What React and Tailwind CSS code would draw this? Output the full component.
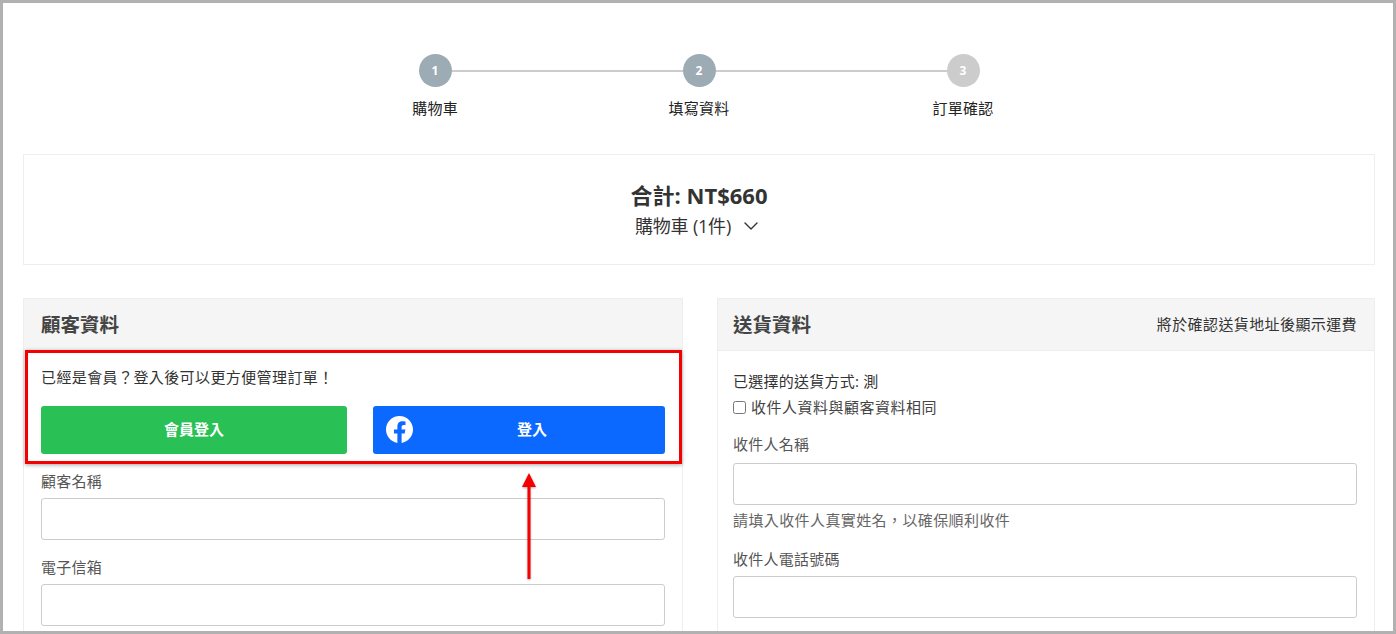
import { ChevronDown } from 'lucide-react'

const font = 'font-["Open_Sans","Noto_Sans_CJK_TC",sans-serif]'

function Field({ label, hint, gap = 'mt-[7px]', className = '' }) {
    return (
        <div className={className}>
            <div className="text-[15px] leading-[20px] text-[#555] tracking-[0.25px]">{label}</div>
            <div className={`${gap} h-[42px] rounded-[3px] border border-[#ccc] bg-white`} />
            {hint && <div className="mt-[5px] text-[15px] leading-[20px] text-[#666] tracking-[0.4px]">{hint}</div>}
        </div>
    )
}

function Step({ n, muted }) {
    return (
        <div className={`w-[33px] h-[33px] shrink-0 rounded-full flex items-center justify-center text-xs font-bold text-white ${muted ? 'bg-[#ccc]' : 'bg-[#9dabb5]'}`}>
            {n}
        </div>
    )
}

function StepLabel({ children }) {
    return (
        <div className="w-[33px] flex justify-center whitespace-nowrap text-[15px] leading-[20px] text-[#222] tracking-[0.25px]">{children}</div>
    )
}

export default function App() {
    return (
        <div className={`${font} relative h-[634px] w-[1396px] overflow-hidden bg-white border-[3px] border-[#b1b1b1] text-[#333]`}>
            {/* Stepper */}
            <div className="pt-[51px] mx-auto w-[561px] translate-x-[1px]">
                <div className="flex items-center">
                    <Step n={1} />
                    <div className="h-[2px] flex-1 bg-[#ccc]" />
                    <Step n={2} />
                    <div className="h-[2px] flex-1 bg-[#ccc]" />
                    <Step n={3} muted />
                </div>
                <div className="mt-[11px] flex justify-between">
                    <StepLabel>購物車</StepLabel>
                    <StepLabel>填寫資料</StepLabel>
                    <StepLabel>訂單確認</StepLabel>
                </div>
            </div>

            <div className="pl-[20px] pr-[18px]">
                {/* Summary */}
                <div className="mt-[36px] h-[111px] border border-[#eee] flex flex-col items-center pt-[25px]">
                    <div className="text-[22px] leading-[30px] font-bold text-[#333]">合計: NT$660</div>
                    <div className="mt-[3px] flex items-center text-[18px] leading-[26px] text-[#333] -tracking-[0.2px]">
                        購物車 (1件)
                        <ChevronDown className="ml-[8px] w-[24px] h-[24px] text-[#333]" strokeWidth={1.4} />
                    </div>
                </div>

                <div className="mt-[33px] flex justify-between">
                    {/* Customer */}
                    <div className="w-[660px] border border-[#eee] h-[400px]">
                        <div className="h-[52px] bg-[#f5f5f5] border-b border-[#eee] px-[17px] flex items-center text-[19.5px] font-bold text-[#444]">
                            顧客資料
                        </div>
                        <div className="px-[17px]">
                            <div className="mt-[16px] text-[15px] leading-[20px] text-[#333] tracking-[0.4px]">已經是會員？登入後可以更方便管理訂單！</div>
                            <div className="mt-[19px] flex gap-[26px]">
                                <button className="w-[306px] h-[48px] pb-[2px] rounded-[3px] bg-[#29c155] text-white text-[15px] font-bold">會員登入</button>
                                <button className="relative w-[292px] h-[48px] pl-[26px] pb-[2px] rounded-[3px] bg-[#0b69ff] text-white text-[15px] font-bold">
                                    <svg viewBox="0 0 24 24" className="absolute left-[13px] top-[10px] w-[27px] h-[27px]" fill="#fff">
                                        <path d="M24 12.07C24 5.4 18.63 0 12 0S0 5.4 0 12.07c0 6.03 4.39 11.02 10.13 11.93v-8.44H7.08v-3.49h3.05V9.41c0-3.02 1.79-4.69 4.53-4.69 1.31 0 2.69.24 2.69.24v2.97h-1.52c-1.49 0-1.96.93-1.96 1.85v2.29h3.33l-.53 3.49h-2.8V24C19.61 23.09 24 18.1 24 12.07z" />
                                    </svg>
                                    登入
                                </button>
                            </div>
                            <Field label="顧客名稱" className="mt-[17px]" />
                            <Field label="電子信箱" className="mt-[17px]" />
                        </div>
                    </div>

                    {/* Delivery */}
                    <div className="w-[658px] border border-[#eee] h-[400px]">
                        <div className="h-[52px] bg-[#f5f5f5] border-b border-[#eee] pl-[15px] pr-[17px] flex items-center justify-between">
                            <span className="text-[19.5px] font-bold text-[#444]">送貨資料</span>
                            <span className="text-[15px] text-[#333] tracking-[0.4px]">將於確認送貨地址後顯示運費</span>
                        </div>
                        <div className="pl-[15px] pr-[17px]">
                            <div className="mt-[20px] text-[15px] leading-[20px] text-[#333] tracking-[0.25px]">已選擇的送貨方式: 測</div>
                            <label className="mt-[6px] flex items-center text-[15px] leading-[20px] text-[#444] tracking-[0.5px]">
                                <input type="checkbox" className="w-[13px] h-[13px] mr-[5px]" />
                                收件人資料與顧客資料相同
                            </label>
                            <div className="mt-[17px] text-[15px] leading-[20px] text-[#555] tracking-[0.25px]">收件人名稱</div>
                            <div className="mt-[9px] h-[42px] rounded-[3px] border border-[#ccc] bg-white" />
                            <div className="mt-[5px] text-[15px] leading-[20px] text-[#666] tracking-[0.4px]">請填入收件人真實姓名，以確保順利收件</div>
                            <Field label="收件人電話號碼" className="mt-[19px]" />
                        </div>
                    </div>
                </div>
            </div>

            {/* Annotation: red frame and arrow drawn over the page */}
            <div className="absolute left-[22px] top-[347px] w-[657px] h-[114px] border-[3px] border-[#f50000] shadow-[0_1px_4px_rgba(0,0,0,0.35)]" />
            <svg className="absolute left-[516px] top-[469px] w-[20px] h-[110px]" viewBox="0 0 20 110">
                <g style={{ filter: 'drop-shadow(0 1px 1px rgba(0,0,0,0.3))' }}>
                    <path d="M10 1 L17 15 L3 15 Z" fill="#f50000" />
                    <rect x="8.5" y="14" width="3" height="93" fill="#f50000" />
                </g>
            </svg>
        </div>
    )
}
